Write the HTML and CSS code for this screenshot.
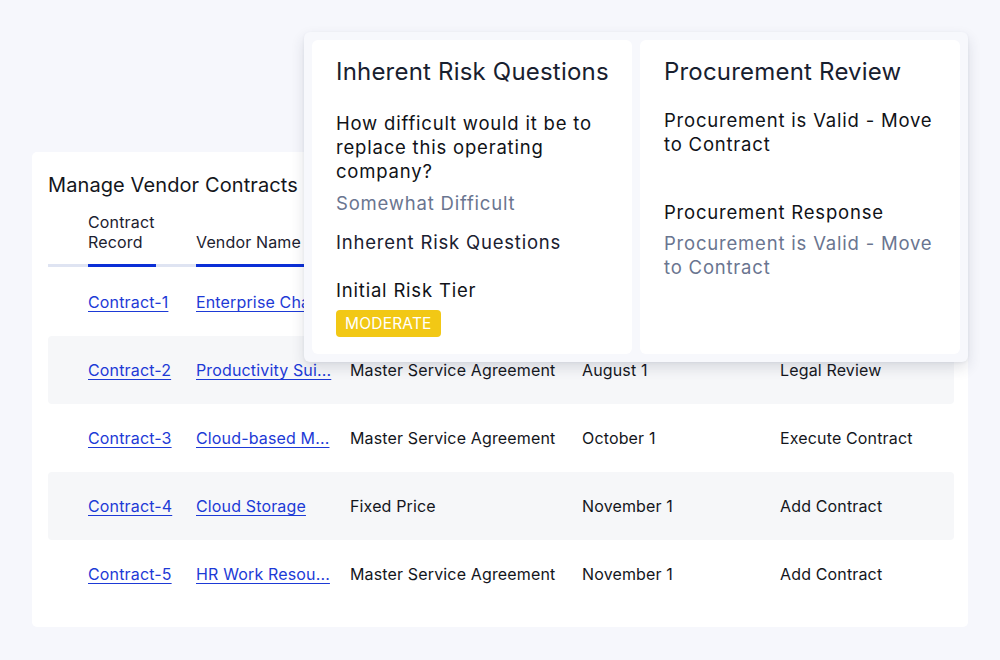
FILE: index.html
```html
<!DOCTYPE html>
<html>
<head>
<meta charset="utf-8">
<link rel="stylesheet" href="styles.css">
</head>
<body>
<div class="stage">
  <section class="contracts">
    <h1 class="contracts-title">Manage Vendor Contracts</h1>
    <div class="grid head">
      <div class="hcell"><span class="hlabel w1">Contract<br>Record</span></div>
      <div class="hcell"><span class="hlabel w2">Vendor Name</span></div>
      <div class="hcell"><span class="hlabel w3">Contract Type</span></div>
      <div class="hcell"><span class="hlabel w4">Start Date</span></div>
      <div class="hcell"><span class="hlabel w5">Status</span></div>
    </div>
    <div class="grid row">
      <div><a class="link" href="#">Contract-1</a></div>
      <div class="clip"><a class="link" href="#">Enterprise Chat Suite</a></div>
      <div>Master Service Agreement</div>
      <div>July 1</div>
      <div>Procurement Review</div>
    </div>
    <div class="grid row alt">
      <div><a class="link" href="#">Contract-2</a></div>
      <div class="clip"><a class="link" href="#">Productivity Sui...</a></div>
      <div>Master Service Agreement</div>
      <div>August 1</div>
      <div>Legal Review</div>
    </div>
    <div class="grid row">
      <div><a class="link" href="#">Contract-3</a></div>
      <div class="clip"><a class="link" href="#">Cloud-based M...</a></div>
      <div>Master Service Agreement</div>
      <div>October 1</div>
      <div>Execute Contract</div>
    </div>
    <div class="grid row alt">
      <div><a class="link" href="#">Contract-4</a></div>
      <div class="clip"><a class="link" href="#">Cloud Storage</a></div>
      <div>Fixed Price</div>
      <div>November 1</div>
      <div>Add Contract</div>
    </div>
    <div class="grid row">
      <div><a class="link" href="#">Contract-5</a></div>
      <div class="clip"><a class="link" href="#">HR Work Resou...</a></div>
      <div>Master Service Agreement</div>
      <div>November 1</div>
      <div>Add Contract</div>
    </div>
  </section>

  <div class="overlay">
    <div class="card">
      <h2 class="card-title">Inherent Risk Questions</h2>
      <p class="q">How difficult would it be to replace this operating company?</p>
      <p class="ans a1">Somewhat Difficult</p>
      <p class="q q2">Inherent Risk Questions</p>
      <p class="q q3">Initial Risk Tier</p>
      <span class="badge">MODERATE</span>
    </div>
    <div class="card">
      <h2 class="card-title">Procurement Review</h2>
      <p class="q p1">Procurement is Valid - Move to Contract</p>
      <p class="q p2">Procurement Response</p>
      <p class="ans p3">Procurement is Valid - Move to Contract</p>
    </div>
  </div>
</div>
</body>
</html>
```
FILE: styles.css
```css
* { box-sizing: border-box; }
html, body { margin: 0; padding: 0; }
body {
  width: 1000px;
  height: 660px;
  background: #f6f7fc;
  font-family: Inter, "Noto Sans", "Liberation Sans", sans-serif;
  color: #14161c;
  overflow: hidden;
}
.stage {
  position: relative;
  width: 1000px;
  height: 660px;
  padding: 152px 32px 0 32px;
}
.contracts {
  width: 936px;
  height: 475px;
  background: #ffffff;
  border-radius: 5px;
  padding: 19px 14px 0 16px;
}
.contracts-title {
  margin: 0;
  font-size: 20px;
  line-height: 28px;
  font-weight: 400;
  color: #14161c;
  letter-spacing: 0.1px;
}
.grid {
  display: grid;
  grid-template-columns: 40px 108px 154px 232px 198px 1fr;
}
.grid > :first-child { grid-column: 2; }
.head {
  margin-top: 13px;
  border-bottom: 3px solid #dfe4f2;
  font-size: 16px;
  line-height: 20px;
  letter-spacing: 0.15px;
  color: #1c2130;
  align-items: end;
}
.hcell { display: flex; }
.hlabel {
  display: block;
  padding-bottom: 12px;
  border-bottom: 3px solid #0b2fd6;
  margin-bottom: -3px;
}
.w1 { width: 68px; }
.w2 { width: 114px; }
.w3 { width: 192px; }
.w4 { width: 158px; }
.w5 { width: 134px; }
.row {
  height: 68px;
  align-items: center;
  font-size: 16px;
  line-height: 20px;
  letter-spacing: 0.15px;
  color: #14161c;
  border-radius: 4px;
}
.head + .row { margin-top: 1px; }
.row.alt { background: #f6f7f9; }
.clip { white-space: nowrap; overflow: hidden; }
.link {
  color: #1d3ad6;
  text-decoration: underline;
  text-underline-offset: 3px;
  text-decoration-thickness: 1px;
}

.overlay {
  position: absolute;
  left: 304px;
  top: 32px;
  width: 664px;
  height: 330px;
  padding: 8px;
  display: flex;
  gap: 8px;
  background: #f7f8fc;
  border-radius: 6px;
  box-shadow: 0 6px 14px rgba(40, 50, 80, 0.14), 0 1px 3px rgba(40, 50, 80, 0.06);
}
.card {
  width: 320px;
  height: 314px;
  background: #ffffff;
  border-radius: 6px;
  padding: 18px 20px 0 24px;
}
.card-title {
  margin: 0;
  font-size: 24px;
  line-height: 28px;
  font-weight: 400;
  letter-spacing: 0.2px;
  color: #18202f;
}
.q {
  margin: 25px 0 0 0;
  font-size: 18.5px;
  line-height: 24px;
  letter-spacing: 0.8px;
  color: #101217;
}
.ans {
  margin: 8px 0 0 0;
  font-size: 18.5px;
  line-height: 24px;
  letter-spacing: 0.8px;
  color: #6a7590;
}
.q2 { margin-top: 15px; color: #1a2030; }
.q3 { margin-top: 24px; }
.badge {
  display: inline-block;
  margin-top: 8px;
  height: 27px;
  padding: 0 9px;
  font-size: 15.5px;
  line-height: 27px;
  letter-spacing: 0.2px;
  color: #ffffff;
  background: #f2c815;
  border-radius: 4px;
}
.p1 { margin-top: 22px; }
.p2 { margin-top: 44px; }
.p3 { margin-top: 7px; }
```
